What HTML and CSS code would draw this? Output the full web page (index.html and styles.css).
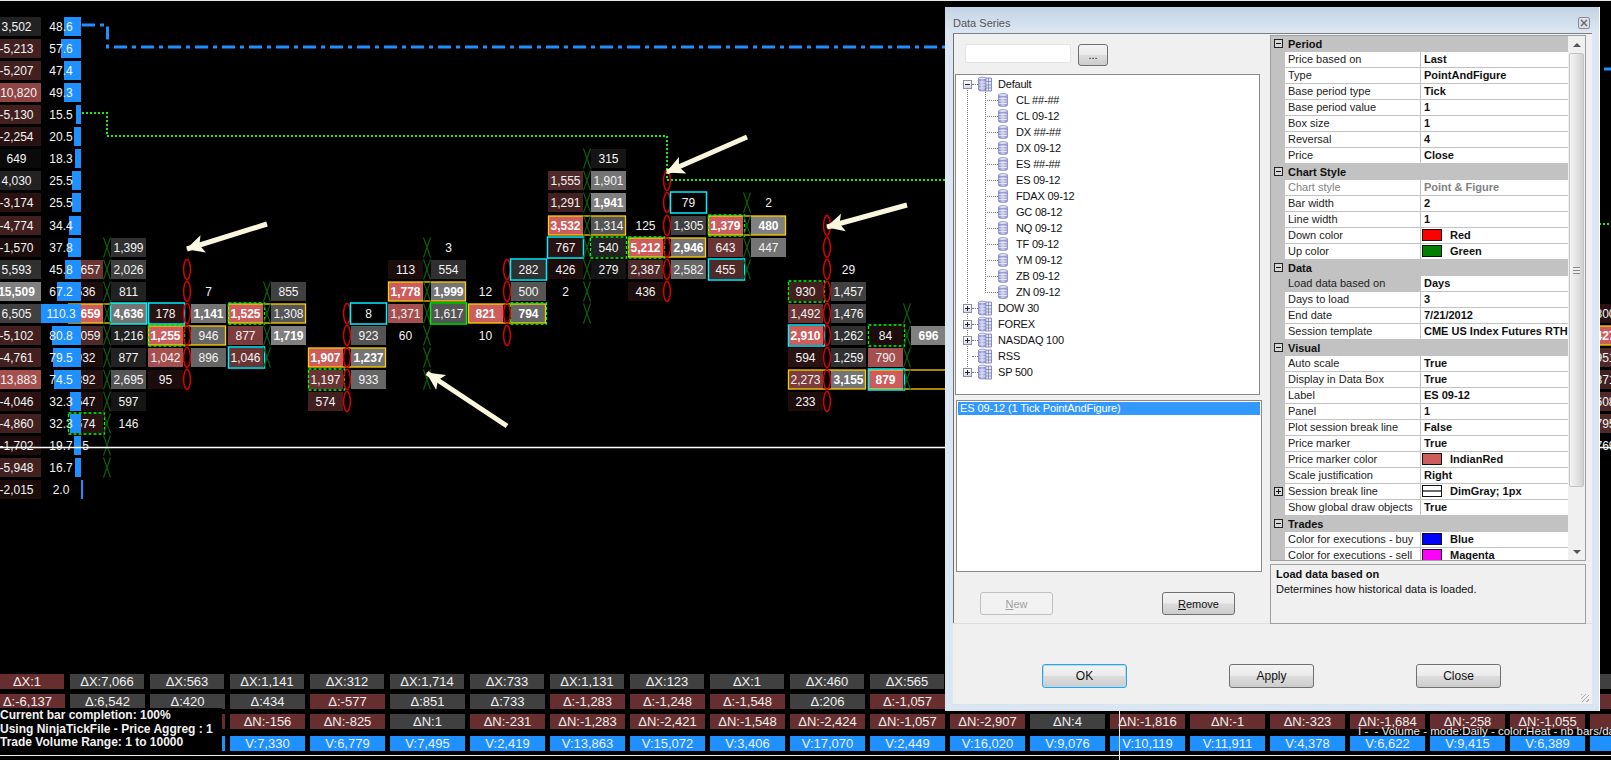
FILE: index.html
```html
<!DOCTYPE html>
<html lang="en">
<head>
<meta charset="utf-8">
<title>Point and Figure chart - Data Series</title>
<link rel="stylesheet" href="styles.css">
</head>
<body>
<svg class="defs" aria-hidden="true">
  <defs>
    <linearGradient id="dbfill" x1="0" x2="1" y1="0" y2="0"><stop offset="0" stop-color="#7f85c8"/><stop offset=".45" stop-color="#c9cdf0"/><stop offset="1" stop-color="#8d92d0"/></linearGradient>
    <symbol id="db" viewBox="0 0 10 14"><path d="M.5 2v10c0 1 2 1.500 4.500 1.500s4.500-.5 4.500-1.500V2z" fill="url(#dbfill)" stroke="#6f74b4" stroke-width=".6"/><ellipse cx="5" cy="2" rx="4.500" ry="1.500" fill="#dfe1f6" stroke="#6f74b4" stroke-width=".6"/><path d="M1 5.500h8M1 8h8M1 10.500h8" stroke="#f0f1fb" stroke-width=".8"/></symbol>
    <symbol id="dbt" viewBox="0 0 14 16"><path d="M7 2h6.500v13H7z" fill="#e6e7f5" stroke="#6f74b4" stroke-width=".8"/><path d="M8 5.500h5.500M8 9h5.500M8 12h5.500M10.500 2v13" stroke="#6f74b4" stroke-width=".7"/><path d="M.5 2.500v11c0 1 1.500 1.500 3.700 1.500s3.800-.5 3.800-1.500v-11z" fill="url(#dbfill)" stroke="#6f74b4" stroke-width=".6"/><ellipse cx="4.200" cy="2.500" rx="3.700" ry="1.400" fill="#dfe1f6" stroke="#6f74b4" stroke-width=".6"/><path d="M1 6h6.500M1 9h6.500M1 12h6.500" stroke="#f0f1fb" stroke-width=".8"/></symbol>
  </defs>
</svg>

<main class="platform">
  <section class="plot">
    <svg class="chart" width="1611" height="674" viewBox="0 0 1611 674">
      <defs>
        <path id="x" class="mx" d="M-3.500-10 3.500 10M3.500-10-3.500 10"/>
        <ellipse id="o" class="mo" rx="3.400" ry="10"/>
        <marker id="head" markerUnits="userSpaceOnUse" markerWidth="22" markerHeight="22" refX="17" refY="10" orient="auto"><path class="ahead" d="M18 10 0 1 4 10 0 19z"/></marker>
      </defs>

      <path class="level-blue" d="M82 25H107.500V47H1300V69H1611"/>
      <path class="level-green" d="M82 113H107V136H667V180H1300V224H1611"/>

      <g transform="translate(0 31)"><rect class="g2 w" x="-9"/><text x="16.500">3,502</text><rect class="vb" x="64" width="17"/><text x="61">48.6</text></g>
      <g transform="translate(0 53)"><rect class="r3 w" x="-9"/><text x="16.500">-5,213</text><rect class="vb" x="61" width="20"/><text x="61">57.6</text></g>
      <g transform="translate(0 75)"><rect class="r3 w" x="-9"/><text x="16.500">-5,207</text><rect class="vb" x="64" width="17"/><text x="61">47.4</text></g>
      <g transform="translate(0 97)"><rect class="r65 w" x="-9"/><text x="16.500">-10,820</text><rect class="vb" x="64" width="17"/><text x="61">49.3</text></g>
      <g transform="translate(0 119)"><rect class="r3 w" x="-9"/><text x="16.500">-5,130</text><rect class="vb" x="76" width="5"/><text x="61">15.5</text></g>
      <g transform="translate(0 141)"><rect class="r2 w" x="-9"/><text x="16.500">-2,254</text><rect class="vb" x="74" width="7"/><text x="61">20.5</text></g>
      <g transform="translate(0 163)"><rect class="g0 w" x="-9"/><text x="16.500">649</text><rect class="vb" x="75" width="6"/><text x="61">18.3</text>
        <use href="#x" x="587" y="-4.500"/><rect class="g1" x="591"/><text x="608.500">315</text></g>
      <g transform="translate(0 185)"><rect class="g2 w" x="-9"/><text x="16.500">4,030</text><rect class="vb" x="72" width="9"/><text x="61">25.5</text>
        <rect class="r4" x="548"/><text x="565.500">1,555</text><use href="#x" x="587" y="-4.500"/><rect class="g7" x="591"/><text x="608.500">1,901</text><use href="#o" x="667" y="-4.500"/></g>
      <g transform="translate(0 207)"><rect class="r2 w" x="-9"/><text x="16.500">-3,174</text><rect class="vb" x="72" width="9"/><text x="61">25.5</text>
        <rect class="r3" x="548"/><text x="565.500">1,291</text><use href="#x" x="587" y="-4.500"/><rect class="g8" x="591"/><text x="608.500" class="b">1,941</text><use href="#o" x="667" y="-4.500"/><text x="688.500">79</text><rect class="cy" x="670.500"/><use href="#x" x="747" y="-4.500"/><text x="768.500">2</text></g>
      <g transform="translate(0 230)"><rect class="r3 w" x="-9"/><text x="16.500">-4,774</text><rect class="vb" x="69" width="12"/><text x="61">34.4</text>
        <rect class="r8" x="548"/><text x="565.500" class="b">3,532</text><rect class="g5" x="591"/><text x="608.500">1,314</text><rect class="gd" x="548.500"/><use href="#x" x="587" y="-4.500"/><text x="645.500">125</text><use href="#o" x="667" y="-4.500"/><rect class="g4" x="671"/><text x="688.500">1,305</text><rect class="r8" x="708"/><text x="725.500" class="b">1,379</text><rect class="g8" x="751"/><text x="768.500" class="b">480</text><rect class="gd" x="708.500"/><rect class="gn" x="708.500"/><use href="#x" x="747" y="-4.500"/><use href="#o" x="827" y="-4.500"/></g>
      <g transform="translate(0 252)"><rect class="r1 w" x="-9"/><text x="16.500">-1,570</text><rect class="vb" x="68" width="13"/><text x="61">37.8</text>
        <use href="#x" x="107" y="-4.500"/><rect class="g3" x="111"/><text x="128.500">1,399</text><use href="#x" x="427" y="-4.500"/><text x="448.500">3</text><rect class="r2" x="548"/><text x="565.500">767</text><rect class="cy" x="547.500"/><use href="#x" x="587" y="-4.500"/><rect class="g2" x="591"/><text x="608.500">540</text><rect class="gn" x="590.500"/><rect class="r8" x="628"/><text x="645.500" class="b">5,212</text><rect class="g7" x="671"/><text x="688.500" class="b">2,946</text><rect class="gd" x="628.500"/><rect class="gn" x="628.500"/><use href="#o" x="667" y="-4.500"/><rect class="r5" x="708"/><text x="725.500">643</text><use href="#x" x="747" y="-4.500"/><rect class="g7" x="751"/><text x="768.500">447</text><use href="#o" x="827" y="-4.500"/></g>
      <g transform="translate(0 274)"><rect class="g3 w" x="-9"/><text x="16.500">5,593</text><rect class="r5" x="68"/><text x="85.500">1,657</text><rect class="vb" x="65" width="16"/><text x="61">45.8</text>
        <use href="#x" x="107" y="-4.500"/><rect class="g4" x="111"/><text x="128.500">2,026</text><use href="#o" x="187" y="-4.500"/><rect class="r1" x="388"/><text x="405.500">113</text><use href="#x" x="427" y="-4.500"/><rect class="g3" x="431"/><text x="448.500">554</text><use href="#o" x="507" y="-4.500"/><rect class="g3" x="511"/><text x="528.500">282</text><rect class="cy" x="510.500"/><rect class="r1" x="548"/><text x="565.500">426</text><use href="#x" x="587" y="-4.500"/><rect class="g1" x="591"/><text x="608.500">279</text><rect class="r4" x="628"/><text x="645.500">2,387</text><use href="#o" x="667" y="-4.500"/><rect class="g6" x="671"/><text x="688.500">2,582</text><rect class="r4" x="708"/><text x="725.500">455</text><rect class="cy" x="708.500"/><use href="#x" x="747" y="-4.500"/><use href="#o" x="827" y="-4.500"/><text x="848.500">29</text></g>
      <g transform="translate(0 296)"><rect class="g8 w" x="-9"/><text x="16.500" class="b">15,509</text><rect class="r1" x="68"/><text x="85.500">536</text><rect class="vb" x="57" width="24"/><text x="61">67.2</text>
        <use href="#x" x="107" y="-4.500"/><rect class="g2" x="111"/><text x="128.500">811</text><use href="#o" x="187" y="-4.500"/><text x="208.500">7</text><use href="#x" x="267" y="-4.500"/><rect class="g4" x="271"/><text x="288.500">855</text><rect class="r8" x="388"/><text x="405.500" class="b">1,778</text><rect class="g7" x="431"/><text x="448.500" class="b">1,999</text><rect class="gd" x="388.500"/><use href="#x" x="427" y="-4.500"/><text x="485.500">12</text><use href="#o" x="507" y="-4.500"/><rect class="g5" x="511"/><text x="528.500">500</text><text x="565.500">2</text><use href="#x" x="587" y="-4.500"/><rect class="r1" x="628"/><text x="645.500">436</text><use href="#o" x="667" y="-4.500"/><rect class="r3" x="788"/><text x="805.500">930</text><rect class="gn" x="788.500"/><use href="#o" x="827" y="-4.500"/><rect class="g4" x="831"/><text x="848.500">1,457</text></g>
      <g transform="translate(0 318)"><rect class="g4 w" x="-9"/><text x="16.500">6,505</text><rect class="r8" x="68"/><text x="85.500" class="b">2,659</text><rect class="gd" x="68.500"/><rect class="vb" x="41" width="40"/><text x="61">110.3</text>
        <rect class="g7" x="111"/><text x="128.500" class="b">4,636</text><rect class="cy" x="110.500"/><use href="#x" x="107" y="-4.500"/><rect class="r2" x="148"/><text x="165.500">178</text><rect class="cy" x="148.500"/><use href="#o" x="187" y="-4.500"/><rect class="g7" x="191"/><text x="208.500" class="b">1,141</text><rect class="r8" x="228"/><text x="245.500" class="b">1,525</text><rect class="g5" x="271"/><text x="288.500">1,308</text><rect class="gd" x="228.500"/><rect class="gn" x="228.500"/><use href="#x" x="267" y="-4.500"/><use href="#o" x="347" y="-4.500"/><text x="368.500">8</text><rect class="cy" x="350.500"/><rect class="r7" x="388"/><text x="405.500">1,371</text><use href="#x" x="427" y="-4.500"/><rect class="g5" x="431"/><text x="448.500">1,617</text><rect class="gb" x="430.500"/><rect class="r8" x="468"/><text x="485.500" class="b">821</text><rect class="g6" x="511"/><text x="528.500" class="b">794</text><rect class="gd" x="468.500"/><rect class="gn" x="510.500"/><use href="#o" x="507" y="-4.500"/><use href="#x" x="587" y="-4.500"/><rect class="r5" x="788"/><text x="805.500">1,492</text><use href="#o" x="827" y="-4.500"/><rect class="g4" x="831"/><text x="848.500">1,476</text><use href="#x" x="907" y="-4.500"/><rect class="r2" x="1588"/><text x="1605.500">800</text></g>
      <g transform="translate(0 340)"><rect class="r3 w" x="-9"/><text x="16.500">-5,102</text><rect class="r4" x="68"/><text x="85.500">1,059</text><rect class="vb" x="52" width="29"/><text x="61">80.8</text>
        <use href="#x" x="107" y="-4.500"/><rect class="g2" x="111"/><text x="128.500">1,216</text><rect class="r8" x="148"/><text x="165.500" class="b">1,255</text><rect class="g6" x="191"/><text x="208.500">946</text><rect class="gd" x="148.500"/><rect class="gn" x="148.500"/><use href="#o" x="187" y="-4.500"/><rect class="r6" x="228"/><text x="245.500">877</text><use href="#x" x="267" y="-4.500"/><rect class="g8" x="271"/><text x="288.500" class="b">1,719</text><use href="#o" x="347" y="-4.500"/><rect class="g5" x="351"/><text x="368.500">923</text><text x="405.500">60</text><use href="#x" x="427" y="-4.500"/><text x="485.500">10</text><use href="#o" x="507" y="-4.500"/><rect class="r8" x="788"/><text x="805.500" class="b">2,910</text><rect class="cy" x="788.500"/><use href="#o" x="827" y="-4.500"/><rect class="g3" x="831"/><text x="848.500">1,262</text><rect class="r1" x="868"/><text x="885.500">84</text><rect class="gn" x="868.500"/><use href="#x" x="907" y="-4.500"/><rect class="g8" x="911"/><text x="928.500" class="b">696</text><rect class="r8" x="1588"/><text x="1605.500" class="b">427</text><rect class="gd" x="1588.500"/></g>
      <g transform="translate(0 362)"><rect class="r3 w" x="-9"/><text x="16.500">-4,761</text><rect class="r1" x="68"/><text x="85.500">932</text><rect class="vb" x="53" width="28"/><text x="61">79.5</text>
        <use href="#x" x="107" y="-4.500"/><rect class="g2" x="111"/><text x="128.500">877</text><rect class="r7" x="148"/><text x="165.500">1,042</text><use href="#o" x="187" y="-4.500"/><rect class="g6" x="191"/><text x="208.500">896</text><rect class="r5" x="228"/><text x="245.500">1,046</text><rect class="cy" x="228.500"/><use href="#x" x="267" y="-4.500"/><rect class="r8" x="308"/><text x="325.500" class="b">1,907</text><rect class="g7" x="351"/><text x="368.500" class="b">1,237</text><rect class="gd" x="308.500"/><use href="#o" x="347" y="-4.500"/><use href="#x" x="427" y="-4.500"/><rect class="r2" x="788"/><text x="805.500">594</text><use href="#o" x="827" y="-4.500"/><rect class="g3" x="831"/><text x="848.500">1,259</text><rect class="r7" x="868"/><text x="885.500">790</text><use href="#x" x="907" y="-4.500"/><rect class="r4" x="1588"/><text x="1605.500">951</text></g>
      <g transform="translate(0 384)"><rect class="r7 w" x="-9"/><text x="16.500">-13,883</text><rect class="r2" x="68"/><text x="85.500">892</text><rect class="vb" x="54" width="27"/><text x="61">74.5</text>
        <use href="#x" x="107" y="-4.500"/><rect class="g5" x="111"/><text x="128.500">2,695</text><rect class="r1" x="148"/><text x="165.500">95</text><use href="#o" x="187" y="-4.500"/><rect class="r5" x="308"/><text x="325.500">1,197</text><rect class="gn" x="308.500"/><use href="#o" x="347" y="-4.500"/><rect class="g6" x="351"/><text x="368.500">933</text><use href="#x" x="427" y="-4.500"/><rect class="r6" x="788"/><text x="805.500">2,273</text><rect class="g7" x="831"/><text x="848.500" class="b">3,155</text><rect class="gd" x="788.500"/><use href="#o" x="827" y="-4.500"/><rect class="r8" x="868"/><text x="885.500" class="b">879</text><rect class="gd long" x="868.500"/><rect class="cy" x="868.500"/><use href="#x" x="907" y="-4.500"/><rect class="r3" x="1588"/><text x="1605.500">871</text></g>
      <g transform="translate(0 406)"><rect class="r2 w" x="-9"/><text x="16.500">-4,046</text><rect class="r1" x="68"/><text x="85.500">547</text><rect class="vb" x="70" width="11"/><text x="61">32.3</text>
        <use href="#x" x="107" y="-4.500"/><rect class="g1" x="111"/><text x="128.500">597</text><rect class="r3" x="308"/><text x="325.500">574</text><use href="#o" x="347" y="-4.500"/><rect class="r1" x="788"/><text x="805.500">233</text><use href="#o" x="827" y="-4.500"/><rect class="r4" x="1588"/><text x="1605.500">608</text></g>
      <g transform="translate(0 428)"><rect class="r3 w" x="-9"/><text x="16.500">-4,860</text><rect class="r2" x="68"/><text x="85.500">674</text><rect class="vb" x="70" width="11"/><text x="61">32.3</text><rect class="gn" x="68.500"/>
        <use href="#x" x="107" y="-4.500"/><text x="128.500">146</text><rect class="r4" x="1588"/><text x="1605.500">795</text></g>
      <g transform="translate(0 450)"><rect class="r1 w" x="-9"/><text x="16.500">-1,702</text><text x="85.500">5</text><rect class="vb" x="74" width="7"/><text x="61">19.7</text>
        <use href="#x" x="107" y="-4.500"/><text x="1605.500">769</text></g>
      <g transform="translate(0 472)"><rect class="r3 w" x="-9"/><text x="16.500">-5,948</text><rect class="vb" x="75" width="6"/><text x="61">16.7</text><use href="#x" x="107" y="-4.500"/></g>
      <g transform="translate(0 494)"><rect class="r1 w" x="-9"/><text x="16.500">-2,015</text><rect class="vb" x="81" width="2"/><text x="61">2.0</text></g>

      <path class="session" d="M0 447.500H1611"/>
      <line class="arrow" x1="267" y1="224" x2="187" y2="249"/>
      <line class="arrow" x1="507" y1="426" x2="427" y2="373"/>
      <line class="arrow" x1="747" y1="137" x2="667" y2="172"/>
      <line class="arrow" x1="907" y1="205" x2="827" y2="227"/>
    </svg>
  </section>

  <section class="strip">
    <div class="strip-row dx">
      <span class="st red">ΔX:1</span><span class="st gray">ΔX:7,066</span><span class="st gray">ΔX:563</span><span class="st gray">ΔX:1,141</span><span class="st gray">ΔX:312</span><span class="st gray">ΔX:1,714</span><span class="st gray">ΔX:733</span><span class="st gray">ΔX:1,131</span><span class="st gray">ΔX:123</span><span class="st gray">ΔX:1</span><span class="st gray">ΔX:460</span><span class="st gray">ΔX:565</span><span class="st gray"></span><span class="st gray"></span><span class="st gray"></span><span class="st gray"></span><span class="st gray"></span><span class="st gray"></span><span class="st gray"></span><span class="st gray"></span><span class="st gray">ΔX:1</span>
    </div>
    <div class="strip-row">
      <span class="st red">Δ:-6,137</span><span class="st gray">Δ:6,542</span><span class="st gray">Δ:420</span><span class="st gray">Δ:434</span><span class="st red">Δ:-577</span><span class="st gray">Δ:851</span><span class="st gray">Δ:733</span><span class="st red">Δ:-1,283</span><span class="st red">Δ:-1,248</span><span class="st red">Δ:-1,548</span><span class="st gray">Δ:206</span><span class="st red">Δ:-1,057</span><span class="st red"></span><span class="st red"></span><span class="st red"></span><span class="st red"></span><span class="st red"></span><span class="st red"></span><span class="st red"></span><span class="st red"></span><span class="st red">Δ:-1</span>
    </div>
    <div class="strip-row">
      <span class="st red"></span><span class="st red"></span><span class="st red"></span><span class="st red">ΔN:-156</span><span class="st red">ΔN:-825</span><span class="st gray">ΔN:1</span><span class="st red">ΔN:-231</span><span class="st red">ΔN:-1,283</span><span class="st red">ΔN:-2,421</span><span class="st red">ΔN:-1,548</span><span class="st red">ΔN:-2,424</span><span class="st red">ΔN:-1,057</span><span class="st red">ΔN:-2,907</span><span class="st gray">ΔN:4</span><span class="st red">ΔN:-1,816</span><span class="st red">ΔN:-1</span><span class="st red">ΔN:-323</span><span class="st red">ΔN:-1,684</span><span class="st red">ΔN:-258</span><span class="st red">ΔN:-1,055</span><span class="st red">ΔN:-4</span>
    </div>
    <div class="strip-row vol">
      <span class="st blue"></span><span class="st blue"></span><span class="st blue"></span><span class="st blue">V:7,330</span><span class="st blue">V:6,779</span><span class="st blue">V:7,495</span><span class="st blue">V:2,419</span><span class="st blue">V:13,863</span><span class="st blue">V:15,072</span><span class="st blue">V:3,406</span><span class="st blue">V:17,070</span><span class="st blue">V:2,449</span><span class="st blue">V:16,020</span><span class="st blue">V:9,076</span><span class="st blue">V:10,119</span><span class="st blue">V:11,911</span><span class="st blue">V:4,378</span><span class="st blue">V:6,622</span><span class="st blue">V:9,415</span><span class="st blue">V:6,389</span><span class="st blue">V:1</span>
    </div>
    <div class="bottom-rule"></div>
  </section>

  <div class="cursor-line"></div>
  <div class="indicator-label">I -  - Volume - mode:Daily - color:Heat - nb bars/day</div>
  <div class="info-box">
    <p>Current bar completion: 100%</p>
    <p>Using NinjaTickFile - Price Aggreg : 1</p>
    <p>Trade Volume Range: 1 to 10000</p>
  </div>

  <section class="dialog">
    <header class="titlebar">
      <span>Data Series</span>
      <span class="closebox"><svg width="8" height="8" viewBox="0 0 8 8"><path d="M1 1 7 7M7 1 1 7" stroke="#666" stroke-width="1.400"/></svg></span>
    </header>
    <div class="client">
      <div class="panes">
        <div class="left-pane">
          <div class="search"><span class="search-input"></span><button class="btn dots">...</button></div>
          <ul class="tree">
            <li class="root"><span class="exp minus"></span><span class="tw"></span><svg class="ib"><use href="#dbt"/></svg><span>Default</span></li>
            <li><ul class="kids">
              <li><span class="tk"></span><svg class="is"><use href="#db"/></svg><span>CL ##-##</span></li>
              <li><span class="tk"></span><svg class="is"><use href="#db"/></svg><span>CL 09-12</span></li>
              <li><span class="tk"></span><svg class="is"><use href="#db"/></svg><span>DX ##-##</span></li>
              <li><span class="tk"></span><svg class="is"><use href="#db"/></svg><span>DX 09-12</span></li>
              <li><span class="tk"></span><svg class="is"><use href="#db"/></svg><span>ES ##-##</span></li>
              <li><span class="tk"></span><svg class="is"><use href="#db"/></svg><span>ES 09-12</span></li>
              <li><span class="tk"></span><svg class="is"><use href="#db"/></svg><span>FDAX 09-12</span></li>
              <li><span class="tk"></span><svg class="is"><use href="#db"/></svg><span>GC 08-12</span></li>
              <li><span class="tk"></span><svg class="is"><use href="#db"/></svg><span>NQ 09-12</span></li>
              <li><span class="tk"></span><svg class="is"><use href="#db"/></svg><span>TF 09-12</span></li>
              <li><span class="tk"></span><svg class="is"><use href="#db"/></svg><span>YM 09-12</span></li>
              <li><span class="tk"></span><svg class="is"><use href="#db"/></svg><span>ZB 09-12</span></li>
              <li><span class="tk"></span><svg class="is"><use href="#db"/></svg><span>ZN 09-12</span></li>
            </ul></li>
            <li class="root"><span class="exp"></span><span class="tw"></span><svg class="ib"><use href="#dbt"/></svg><span>DOW 30</span></li>
            <li class="root"><span class="exp"></span><span class="tw"></span><svg class="ib"><use href="#dbt"/></svg><span>FOREX</span></li>
            <li class="root"><span class="exp"></span><span class="tw"></span><svg class="ib"><use href="#dbt"/></svg><span>NASDAQ 100</span></li>
            <li class="root"><span class="exp none"></span><span class="tw"></span><svg class="ib"><use href="#dbt"/></svg><span>RSS</span></li>
            <li class="root"><span class="exp"></span><span class="tw"></span><svg class="ib"><use href="#dbt"/></svg><span>SP 500</span></li>
          </ul>
          <div class="serieslist"><div class="selected">ES 09-12 (1 Tick PointAndFigure)</div></div>
          <div class="listbtns"><button class="btn wide off"><u>N</u>ew</button><button class="btn wide"><u>R</u>emove</button></div>
        </div>
        <div class="right-pane">
          <div class="grid">
            <div class="rows">
              <div class="ph"><i class="pm"></i>Period</div>
              <div class="pr"><span class="pn">Price based on</span><span class="pv">Last</span></div>
              <div class="pr"><span class="pn">Type</span><span class="pv">PointAndFigure</span></div>
              <div class="pr"><span class="pn">Base period type</span><span class="pv">Tick</span></div>
              <div class="pr"><span class="pn">Base period value</span><span class="pv">1</span></div>
              <div class="pr"><span class="pn">Box size</span><span class="pv">1</span></div>
              <div class="pr"><span class="pn">Reversal</span><span class="pv">4</span></div>
              <div class="pr"><span class="pn">Price</span><span class="pv">Close</span></div>
              <div class="ph"><i class="pm"></i>Chart Style</div>
              <div class="pr dis"><span class="pn">Chart style</span><span class="pv">Point &amp; Figure</span></div>
              <div class="pr"><span class="pn">Bar width</span><span class="pv">2</span></div>
              <div class="pr"><span class="pn">Line width</span><span class="pv">1</span></div>
              <div class="pr"><span class="pn">Down color</span><span class="pv"><i class="sw red-sw"></i>Red</span></div>
              <div class="pr"><span class="pn">Up color</span><span class="pv"><i class="sw green-sw"></i>Green</span></div>
              <div class="ph"><i class="pm"></i>Data</div>
              <div class="pr sel"><span class="pn">Load data based on</span><span class="pv">Days</span></div>
              <div class="pr"><span class="pn">Days to load</span><span class="pv">3</span></div>
              <div class="pr"><span class="pn">End date</span><span class="pv">7/21/2012</span></div>
              <div class="pr"><span class="pn">Session template</span><span class="pv">CME US Index Futures RTH</span></div>
              <div class="ph"><i class="pm"></i>Visual</div>
              <div class="pr"><span class="pn">Auto scale</span><span class="pv">True</span></div>
              <div class="pr"><span class="pn">Display in Data Box</span><span class="pv">True</span></div>
              <div class="pr"><span class="pn">Label</span><span class="pv">ES 09-12</span></div>
              <div class="pr"><span class="pn">Panel</span><span class="pv">1</span></div>
              <div class="pr"><span class="pn">Plot session break line</span><span class="pv">False</span></div>
              <div class="pr"><span class="pn">Price marker</span><span class="pv">True</span></div>
              <div class="pr"><span class="pn">Price marker color</span><span class="pv"><i class="sw indian-sw"></i>IndianRed</span></div>
              <div class="pr"><span class="pn">Scale justification</span><span class="pv">Right</span></div>
              <div class="pr plus"><i class="pm add"></i><span class="pn">Session break line</span><span class="pv"><i class="sw line-sw"></i>DimGray; 1px</span></div>
              <div class="pr"><span class="pn">Show global draw objects</span><span class="pv">True</span></div>
              <div class="ph"><i class="pm"></i>Trades</div>
              <div class="pr"><span class="pn">Color for executions - buy</span><span class="pv"><i class="sw blue-sw"></i>Blue</span></div>
              <div class="pr"><span class="pn">Color for executions - sell</span><span class="pv"><i class="sw magenta-sw"></i>Magenta</span></div>
            </div>
            <div class="scroll">
              <span class="sb-btn"><i class="tri up"></i></span>
              <span class="thumb"><i class="grip"></i></span>
              <span class="sb-btn end"><i class="tri down"></i></span>
            </div>
          </div>
          <div class="help">
            <strong>Load data based on</strong>
            <span>Determines how historical data is loaded.</span>
          </div>
        </div>
      </div>
      <footer class="actions">
        <button class="btn act focus">OK</button>
        <button class="btn act">Apply</button>
        <button class="btn act">Close</button>
        <i class="sizegrip"></i>
      </footer>
    </div>
  </section>
</main>
</body>
</html>
```
FILE: styles.css
```css
* { box-sizing: border-box; }
html, body { margin: 0; padding: 0; background: #000; }
body { width: 1611px; height: 760px; overflow: hidden; font-family: "Liberation Sans", Arial, sans-serif; }
.defs { position: absolute; width: 0; height: 0; }
.platform { position: relative; width: 1611px; height: 760px; background: #000; overflow: hidden; }

/* chart canvas */
.plot { height: 674px; border-top: 1px solid #e8e8e8; overflow: hidden; }
.chart { display: block; margin-top: -1px; font: 12px "Liberation Sans", Arial, sans-serif; }
.chart text { fill: #f4f4f4; text-anchor: middle; }
.chart text.b { font-weight: 700; fill: #fff; }
.chart rect { height: 19px; y: -14px; }
.r1,.r2,.r3,.r4,.r5,.r6,.r65,.r7,.r8,.g0,.g1,.g2,.g3,.g4,.g5,.g6,.g7,.g8 { width: 35px; }
.chart .w { width: 50px; }
.r1 { fill: #1c0c0c; } .r2 { fill: #2a1212; } .r3 { fill: #432020; } .r4 { fill: #502929; }
.r5 { fill: #6a3434; } .r6 { fill: #7d3c3c; } .r65 { fill: #904545; } .r7 { fill: #a54f4f; } .r8 { fill: #cd5c5c; }
.g0 { fill: #0a0a0a; } .g1 { fill: #151515; } .g2 { fill: #222; } .g3 { fill: #303030; } .g4 { fill: #404040; }
.g5 { fill: #555; } .g6 { fill: #666; } .g7 { fill: #747474; } .g8 { fill: #808080; }
.vb { fill: #1e90ff; }
.chart .cy { width: 36px; height: 21px; y: -15px; fill: none; stroke: #00f0ff; stroke-width: 1.500; }
.chart .gd { width: 77px; fill: none; stroke: #ffcc00; stroke-width: 1.300; }
.chart .gd.long { width: 600px; }
.chart .gn { width: 36px; height: 21px; y: -15px; fill: none; stroke: #00ff00; stroke-width: 1.300; stroke-dasharray: 3 2; }
.chart .gb { width: 36px; height: 21px; y: -15px; fill: none; stroke: #00f000; stroke-width: 1.500; }
.mx { fill: none; stroke: #0a660a; stroke-width: 1.100; }
.mo { fill: none; stroke: #d80000; stroke-width: 1.500; }
.level-blue { fill: none; stroke: #1e90ff; stroke-width: 3; stroke-dasharray: 13 5 4 5; }
.level-green { fill: none; stroke: #16f016; stroke-width: 2; stroke-dasharray: 2 2; }
.session { fill: none; stroke: #fff; stroke-width: 1.300; }
.arrow { stroke: #fbf6de; stroke-width: 5; marker-end: url(#head); }
.ahead { fill: #fbf6de; }

/* bottom statistic rows */
.strip { height: 86px; }
.strip-row { display: flex; height: 15px; margin: 0 0 5px -10px; width: 1700px; }
.strip-row.vol { margin-top: 7px; margin-bottom: 5px; }
.st { flex: 0 0 75px; margin-right: 5px; height: 15px; font-size: 13px; line-height: 15px; color: #f0f0f0; text-align: center; white-space: nowrap; overflow: hidden; }
.dx .st { flex-basis: 74px; margin-right: 6px; }
.st.red { background: #662e2e; }
.st.gray { background: #404040; }
.st.blue { background: #1e90ff; color: #e8f2ff; }
.bottom-rule { height: 1px; margin-top: -1px; background: #f0f0f0; }

/* overlays on the chart */
.cursor-line { position: absolute; left: 1119px; top: 711px; width: 1px; height: 49px; background: #e8e8e8; }
.indicator-label { position: absolute; left: 1358px; top: 724px; font-size: 11.500px; line-height: 14px; color: #eee; white-space: pre; }
.info-box { position: absolute; left: 0; top: 708px; width: 222px; height: 45px; background: #000; color: #f2f2f2; font-size: 12px; font-weight: 700; line-height: 13.500px; padding-top: 1px; }
.info-box p { margin: 0; white-space: nowrap; }

/* dialog window */
.dialog { position: absolute; left: 945px; top: 7px; width: 654px; height: 704px; padding: 0 7px 7px 8px; background: linear-gradient(#c3d3e4 0, #dce7f3 26px, #dbe6f3 100%); font-size: 11px; color: #111; box-shadow: 1px 0 0 #fff; }
.titlebar { height: 26px; display: flex; justify-content: space-between; align-items: flex-end; color: #555; padding-bottom: 3px; padding-right: 2px; line-height: 14px; }
.closebox { width: 12px; height: 12px; margin-bottom: 1px; border: 1px solid #8c8c8c; border-radius: 2px; background: #d9dfe6; display: flex; align-items: center; justify-content: center; }
.client { height: 671px; background: #f0f0f0; border-top: 1px solid #808080; }
.panes { display: flex; height: 590px; border-bottom: 1px solid #dedede; }
.left-pane { flex: 0 0 317px; border-left: 1px solid #707070; }
.right-pane { flex: 1; padding-right: 6px; }

.search { display: flex; gap: 7px; padding: 10px 0 0 11px; height: 40px; }
.search-input { width: 106px; height: 19px; background: #fff; border: 1px solid #e4e4e4; border-radius: 2px; }
.btn { padding: 0; font: 11px "Liberation Sans", Arial, sans-serif; color: #111; border: 1px solid #707070; border-radius: 3px; background: linear-gradient(#f3f3f3 0, #ebebeb 48%, #dcdcdc 52%, #cdcdcd 100%); }
.dots { width: 30px; height: 22px; }
.tree { list-style: none; margin: 0 0 0 1px; padding: 1px 0 0; width: 305px; height: 321px; background: #fff; border: 1px solid #8a8a8a; position: relative; letter-spacing: -.2px; }
.tree::before { content: ""; position: absolute; left: 11px; top: 10px; height: 288px; border-left: 1px dotted #777; }
.tree li { list-style: none; }
.root { display: flex; align-items: center; height: 16px; padding-left: 7px; position: relative; }
.exp { width: 9px; height: 9px; flex: none; position: relative; border: 1px solid #8a8fa8; background: linear-gradient(#fff, #d8dae8); }
.exp::before { content: ""; position: absolute; left: 1px; right: 1px; top: 3px; height: 1px; background: #223; }
.exp::after { content: ""; position: absolute; top: 1px; bottom: 1px; left: 3px; width: 1px; background: #223; }
.exp.minus::after { display: none; }
.exp.none { visibility: hidden; }
.tw { width: 6px; flex: none; border-top: 1px dotted #777; }
.ib { width: 14px; height: 16px; flex: none; margin-right: 6px; }
.kids { margin: 0; padding: 0 0 0 29px; position: relative; }
.kids::before { content: ""; position: absolute; left: 29px; top: -6px; height: 205px; border-left: 1px dotted #777; }
.kids li { display: flex; align-items: center; height: 16px; }
.tk { width: 13px; flex: none; border-top: 1px dotted #777; }
.is { width: 10px; height: 14px; flex: none; margin-right: 8px; }

.serieslist { margin: 5px 0 0 2px; width: 306px; height: 172px; background: #fff; border: 1px solid #8a8a8a; padding: 1px; }
.selected { height: 13px; line-height: 13px; padding-left: 2px; background: #3399ff; color: #fff; letter-spacing: -.1px; }
.listbtns { display: flex; gap: 109px; padding: 20px 0 0 26px; }
.wide { width: 73px; height: 23px; }
.btn.off { color: #a0a0a0; border-color: #c0c0c0; background: #f2f2f2; }

.grid { display: flex; margin-top: 1px; height: 526px; border: 1px solid #a0a0a0; }
.rows { flex: 1; min-width: 0; overflow: hidden; }
.ph { height: 16px; background: #c2c2c2; font-weight: 700; line-height: 16px; padding: 0 0 1px 3px; display: flex; align-items: center; }
.pm { width: 9px; height: 9px; flex: none; margin-right: 5px; border: 1px solid #222; background: #d8d8d8; position: relative; }
.pm::before { content: ""; position: absolute; left: 1px; right: 1px; top: 3px; height: 1px; background: #111; }
.pm.add::after { content: ""; position: absolute; top: 1px; bottom: 1px; left: 3px; width: 1px; background: #111; }
.pr { display: flex; height: 16px; padding-left: 14px; background: #c2c2c2; line-height: 15px; position: relative; }
.pr.plus { padding-left: 0; }
.pr.plus .pm { margin: 3px 2px 0 3px; }
.pn { flex: 0 0 135px; padding-left: 3px; background: #fff; border-bottom: 1px solid #c2c2c2; color: #222; white-space: nowrap; overflow: hidden; }
.pv { flex: 1; min-width: 0; padding-left: 3px; background: #fff; border-left: 1px solid #c2c2c2; border-bottom: 1px solid #c2c2c2; font-weight: 700; white-space: nowrap; overflow: hidden; display: flex; align-items: flex-start; }
.pr.sel .pn { background: #c2c2c2; }
.pr.dis .pn, .pr.dis .pv { color: #808080; }
.sw { width: 20px; height: 12px; flex: none; margin: 1px 8px 0 -2px; border: 1px solid #111; }
.red-sw { background: #f00; } .green-sw { background: #008000; } .indian-sw { background: #cd5c5c; }
.blue-sw { background: #00f; } .magenta-sw { background: #f0f; }
.line-sw { background: linear-gradient(#fff 4px, #696969 4px, #696969 6px, #fff 6px); }
.scroll { flex: 0 0 17px; display: flex; flex-direction: column; align-items: center; background: #f0f0f0; }
.sb-btn { height: 17px; flex: none; display: flex; align-items: center; justify-content: center; }
.sb-btn.end { margin-top: auto; }
.tri { width: 0; height: 0; border-left: 4px solid transparent; border-right: 4px solid transparent; }
.tri.up { border-bottom: 4px solid #555; }
.tri.down { border-top: 4px solid #555; }
.thumb { width: 15px; height: 434px; border: 1px solid #c4c4c4; border-radius: 2px; background: linear-gradient(90deg, #f4f4f4, #dedede 70%, #cfcfcf); display: flex; align-items: center; justify-content: center; }
.grip { width: 7px; height: 7px; background: repeating-linear-gradient(#888 0 1px, #eee 1px 3px); }
.help { margin-top: 3px; height: 60px; border: 1px solid #a0a0a0; padding: 2px 0 0 5px; display: flex; flex-direction: column; line-height: 15px; }

.actions { display: flex; gap: 102px; padding: 40px 0 0 89px; position: relative; height: 80px; }
.act { width: 85px; height: 24px; font-size: 12px; }
.act.focus { border-color: #3a9fd8; box-shadow: inset 0 0 0 1px #a9def5; }
.sizegrip { position: absolute; right: 3px; bottom: 2px; width: 8px; height: 8px; background: repeating-linear-gradient(135deg, #aab 0 1px, transparent 1px 3px); }
```
